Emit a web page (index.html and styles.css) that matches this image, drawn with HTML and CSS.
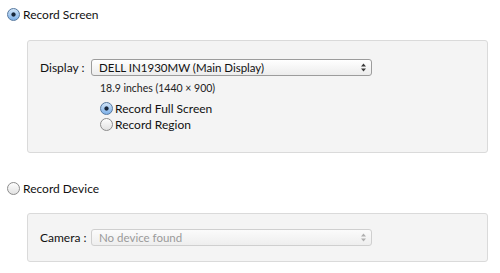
FILE: index.html
```html
<!DOCTYPE html>
<html>
<head>
<title>Record Source</title>
<link rel="stylesheet" href="styles.css">
</head>
<body>

<div class="choice">
	<span class="radio on"></span>
	<span>Record Screen</span>
</div>

<div class="panel screen">
	<div class="field">
		<span class="lbl">Display :</span>
		<div class="select">
			<span>DELL IN1930MW (Main Display)</span>
			<svg class="arrows" width="5" height="9" viewBox="0 0 5 9"><path d="M2.5 0.5 L5 3.5 L0 3.5 Z M2.5 8.5 L5 5.5 L0 5.5 Z"/></svg>
		</div>
	</div>
	<div class="info">18.9 inches (1440 &times; 900)</div>
	<div class="sub">
		<div class="choice">
			<span class="radio on"></span>
			<span>Record Full Screen</span>
		</div>
		<div class="choice">
			<span class="radio"></span>
			<span>Record Region</span>
		</div>
	</div>
</div>

<div class="choice device">
	<span class="radio"></span>
	<span>Record Device</span>
</div>

<div class="panel camera">
	<div class="field">
		<span class="lbl">Camera :</span>
		<div class="select off">
			<span>No device found</span>
			<svg class="arrows" width="5" height="9" viewBox="0 0 5 9"><path d="M2.5 0.5 L5 3.5 L0 3.5 Z M2.5 8.5 L5 5.5 L0 5.5 Z"/></svg>
		</div>
	</div>
</div>

</body>
</html>
```

FILE: styles.css
```css
body {
	margin: 0px;
	padding: 7px 0px 0px 7px;
	background-color: #FFF;
	font-family: Lato, "Open Sans", sans-serif;
	font-size: 12px;
	color: #111;
}

.choice {
	display: flex;
	align-items: center;
	gap: 3px;
	height: 14px;
}

.radio {
	display: block;
	width: 11px;
	height: 11px;
	border-radius: 50%;
	border: 1px solid #8c8c8c;
	background: linear-gradient(#fdfdfd, #e2e2e2);
}

.radio.on {
	border-color: #56789f;
	background: radial-gradient(circle, #17263a 0px, #17263a 1.7px, transparent 2.5px), linear-gradient(#d0e4f8, #7db0e8);
}

.panel {
	box-sizing: border-box;
	width: 461px;
	margin: 19px 0px 0px 20px;
	padding: 18px 0px 0px 12px;
	background-color: #f4f4f4;
	border: 1px solid #dadada;
	border-radius: 3px;
}

.screen {
	height: 113px;
}

.camera {
	height: 49px;
	margin-top: 18px;
	padding-top: 15px;
}

.device {
	margin-top: 28px;
}

/* label + popup row */

.field {
	display: flex;
	align-items: center;
}

.lbl {
	width: 51px;
}

.select {
	box-sizing: border-box;
	display: flex;
	align-items: center;
	justify-content: space-between;
	width: 281px;
	height: 17px;
	padding: 0px 5px 0px 7px;
	border: 1px solid #9c9c9c;
	border-radius: 3px;
	background: linear-gradient(#ffffff, #ececec);
	font-size: 11.5px;
}

.select.off {
	border-color: #cfcfcf;
	color: #9a9a9a;
	background: linear-gradient(#fbfbfb, #eeeeee);
}

.arrows {
	fill: #3a3a3a;
}

.select.off .arrows {
	fill: #b0b0b0;
}

.info {
	margin: 6px 0px 0px 60px;
	font-size: 10.5px;
	color: #222;
}

.sub {
	margin: 7px 0px 0px 60px;
	display: flex;
	flex-direction: column;
	gap: 2px;
}

.sub .choice {
	gap: 2px;
}
```
